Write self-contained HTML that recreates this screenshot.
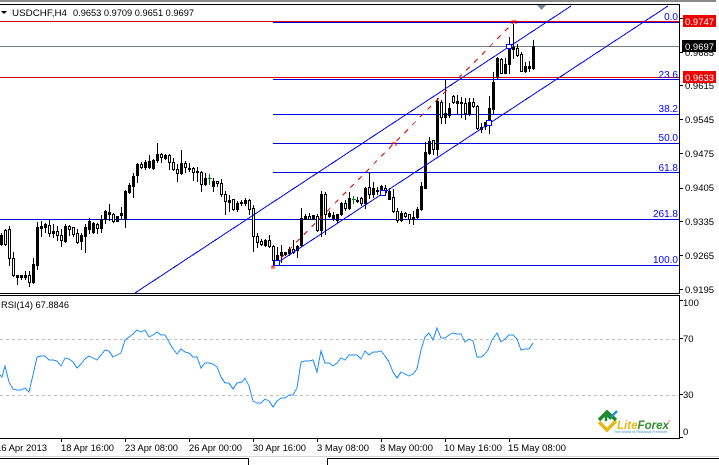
<!DOCTYPE html>
<html><head><meta charset="utf-8"><title>USDCHF,H4</title>
<style>
html,body{margin:0;padding:0;background:#fff;width:719px;height:465px;overflow:hidden}
svg{display:block}
text{font-family:"Liberation Sans",sans-serif;font-size:9.5px;fill:#000}
.f{fill:#0000ff;text-anchor:end;font-size:10px}
</style></head><body>
<svg width="719" height="465" viewBox="0 0 719 465" xmlns="http://www.w3.org/2000/svg">
<rect width="719" height="465" fill="#fff"/>
<rect x="0" y="0" width="716" height="2" fill="#8a8a8a"/>
<g shape-rendering="crispEdges" fill="none">
<path d="M0 21.5H679" stroke="#e00000"/>
<path d="M0 46.5H679" stroke="#708090"/>
<path d="M0 77.5H679" stroke="#e00000"/>
<path d="M0 219.5H679" stroke="#0000dd"/>
<path d="M273 22.5H679M273 79.5H679M273 114.5H679M273 143.5H679M273 172.5H679M273 265.5H679" stroke="#0000dd"/>
</g>
<!-- candles -->
<g shape-rendering="crispEdges" fill="none" stroke="#000">
<path d="M1.5 233V246M5.5 229V246M9.5 226V266M13.5 252V277M17.5 275V285M21.5 275V280M25.5 271V280M29.5 271V287M33.5 258V284M37.5 222V270M41.5 221V237M45.5 223V233M49.5 220V237M53.5 224V238M57.5 226V241M61.5 229V247M65.5 224V243M69.5 225V236M73.5 227V237M77.5 229V244M81.5 233V250M85.5 224V253M89.5 218V234M93.5 222V234M97.5 223V234M101.5 215V233M105.5 210V224M109.5 204V221M113.5 213V223M117.5 216V222M121.5 207V219M125.5 190V228M129.5 183V194M133.5 173V198M137.5 163V183M141.5 162V169M145.5 160V170M149.5 155V169M153.5 159V170M157.5 143V163M161.5 153V163M165.5 154V160M169.5 154V170M173.5 158V171M177.5 164V182M181.5 150V175M185.5 161V173M189.5 163V172M193.5 167V181M197.5 167V182M201.5 171V192M205.5 173V186M213.5 178V192M217.5 181V187M221.5 179V197M225.5 191V215M229.5 195V212M233.5 199V211M237.5 201V212M241.5 200V206M245.5 198V206M249.5 199V215M253.5 205V252M257.5 233V248M261.5 239V246M265.5 239V247M269.5 235V248M273.5 245V266M277.5 247V266M281.5 245V263M285.5 252V256M289.5 247V256M293.5 240V254M297.5 245V258M301.5 208V247M305.5 214V220M309.5 213V220M313.5 215V220M317.5 214V232M321.5 191V237M325.5 192V235M329.5 211V218M333.5 212V221M337.5 214V223M341.5 202V216M345.5 200V211M349.5 192V210M357.5 197V203M361.5 197V206M365.5 187V209M369.5 172V199M373.5 182V198M377.5 187V195M381.5 185V192M385.5 185V194M389.5 188V200M393.5 189V213M397.5 208V223M401.5 211V222M405.5 212V218M409.5 214V224M413.5 211V225M417.5 207V220M421.5 182V211M425.5 142V189M429.5 137V155M433.5 140V155M437.5 98V156M441.5 100V124M445.5 79V124M449.5 103V118M453.5 95V104M457.5 95V114M461.5 97V118M465.5 98V120M469.5 98V116M473.5 98V108M477.5 105V130M481.5 123V133M485.5 122V130M489.5 96V134M493.5 72V114M497.5 57V79M501.5 58V74M505.5 58V74M509.5 37V74M513.5 24V59M517.5 44V57M521.5 52V72M525.5 62V73M529.5 61V72M533.5 40V70"/>
<path stroke-width="3" d="M1.5 235V245M17.5 275V278M21.5 275V278M25.5 275V278M33.5 264V283M37.5 227V266M41.5 226V229M45.5 224V228M53.5 231V234M65.5 226V242M81.5 235V242M85.5 227V237M89.5 221V230M93.5 223V233M101.5 219V229M105.5 211V220M109.5 212V215M117.5 216V222M121.5 213V216M125.5 191V220M129.5 185V193M133.5 176V187M137.5 164V176M145.5 162V168M149.5 161V168M153.5 160V169M157.5 154V161M165.5 155V159M181.5 163V174M189.5 168V170M197.5 171V173M205.5 178V185M213.5 181V187M229.5 200V203M237.5 203V210M241.5 202V204M245.5 200V204M265.5 240V246M277.5 255V261M281.5 252V256M285.5 252V255M289.5 249V254M297.5 246V251M301.5 218V246M305.5 216V220M313.5 215V219M321.5 194V231M329.5 213V217M333.5 215V219M337.5 214V221M341.5 203V215M349.5 198V209M357.5 200V202M365.5 188V204M373.5 188V195M377.5 190V192M381.5 186V191M389.5 191V200M401.5 213V221M413.5 217V220M417.5 209V218M421.5 186V210M425.5 152V189M429.5 141V154M437.5 101V150M445.5 113V118M449.5 108V116M457.5 101V104M461.5 102V104M469.5 102V115M481.5 127V130M485.5 122V127M489.5 108V123M493.5 82V110M497.5 58V78M505.5 64V74M509.5 48V65M513.5 47V50M525.5 66V72M529.5 66V69M533.5 46V69"/>
<path fill="#fff" d="M4.5 230.5h2V244.5h-2zM8.5 229.5h2V258.5h-2zM12.5 258.5h2V275.5h-2zM28.5 275.5h2V282.5h-2zM48.5 225.5h2V233.5h-2zM56.5 231.5h2V235.5h-2zM60.5 235.5h2V240.5h-2zM68.5 226.5h2V229.5h-2zM72.5 227.5h2V234.5h-2zM76.5 233.5h2V242.5h-2zM96.5 224.5h2V228.5h-2zM112.5 214.5h2V221.5h-2zM140.5 164.5h2V167.5h-2zM160.5 154.5h2V157.5h-2zM168.5 155.5h2V162.5h-2zM172.5 162.5h2V169.5h-2zM176.5 169.5h2V173.5h-2zM184.5 163.5h2V167.5h-2zM192.5 168.5h2V172.5h-2zM200.5 172.5h2V184.5h-2zM216.5 181.5h2V183.5h-2zM220.5 183.5h2V194.5h-2zM224.5 194.5h2V201.5h-2zM232.5 199.5h2V209.5h-2zM248.5 200.5h2V209.5h-2zM252.5 208.5h2V236.5h-2zM256.5 236.5h2V242.5h-2zM260.5 241.5h2V244.5h-2zM268.5 240.5h2V246.5h-2zM272.5 246.5h2V260.5h-2zM292.5 249.5h2V252.5h-2zM308.5 216.5h2V219.5h-2zM316.5 216.5h2V230.5h-2zM324.5 194.5h2V214.5h-2zM344.5 203.5h2V208.5h-2zM360.5 198.5h2V203.5h-2zM368.5 187.5h2V194.5h-2zM384.5 188.5h2V192.5h-2zM392.5 197.5h2V211.5h-2zM396.5 211.5h2V220.5h-2zM404.5 213.5h2V216.5h-2zM408.5 214.5h2V219.5h-2zM432.5 140.5h2V149.5h-2zM440.5 102.5h2V117.5h-2zM452.5 96.5h2V102.5h-2zM464.5 103.5h2V113.5h-2zM472.5 102.5h2V106.5h-2zM476.5 106.5h2V128.5h-2zM500.5 59.5h2V73.5h-2zM516.5 48.5h2V55.5h-2zM520.5 54.5h2V71.5h-2z"/>
<path stroke="#008000" d="M209.5 174V185M208 178.5H212M353.5 196V204M352 199.5H356"/>
</g>
<!-- objects -->
<g fill="none">
<path d="M273 266L514 22" stroke="#e00000" stroke-dasharray="5 6" shape-rendering="crispEdges"/>
<path d="M272 269V266H274V269M392 146V143H396V146M512 24V21H516V24" stroke="#e00000" shape-rendering="crispEdges"/>
<path d="M135 293L571 6" stroke="#0000ff" shape-rendering="crispEdges"/>
<path d="M277 263L668 6" stroke="#0000ff" shape-rendering="crispEdges"/>
<g stroke="#0000ff" fill="#fff" shape-rendering="crispEdges">
<rect x="274.5" y="260.5" width="5" height="5"/>
<rect x="380.5" y="190.5" width="5" height="5"/>
<rect x="486.5" y="120.5" width="5" height="5"/>
<rect x="506.5" y="44.5" width="5" height="4"/>
</g>
</g>
<polygon points="537,5 546,5 541.5,10" fill="#778899"/>
<!-- frames -->
<g shape-rendering="crispEdges" fill="none" stroke="#000">
<path d="M0 4.5H679.5V293.5H0M0 295.5H679.5V438.5H0"/>
<path d="M680 18.5h3M680 52.5h3M680 85.5h3M680 119.5h3M680 153.5h3M680 188.5h3M680 221.5h3M680 255.5h3M680 289.5h3M680 300.5h3M680 338.5h3M680 394.5h3M680 437.5h3"/>
<path d="M61.5 439v3M125.5 439v3M189.5 439v3M253.5 439v3M317.5 439v3M381.5 439v3M445.5 439v3M509.5 439v3"/>
<path d="M0 458.5H248.5V465M327.5 465V458.5H719"/>
</g>
<path d="M0 456.5H719" stroke="#d8d8d8" shape-rendering="crispEdges"/>
<polygon points="1,11 7,11 4,14" fill="#000"/>
<!-- header -->
<text x="12" y="16" textLength="55" lengthAdjust="spacingAndGlyphs">USDCHF,H4</text>
<text x="73" y="16" textLength="121" lengthAdjust="spacingAndGlyphs">0.9653 0.9709 0.9651 0.9697</text>
<!-- fib labels -->
<text class="f" x="678" y="20">0.0</text>
<text class="f" x="678" y="78">23.6</text>
<text class="f" x="678" y="112">38.2</text>
<text class="f" x="678" y="141">50.0</text>
<text class="f" x="678" y="171">61.8</text>
<text class="f" x="678" y="217">261.8</text>
<text class="f" x="678" y="263">100.0</text>
<!-- price axis -->
<text x="685" y="22">0.9755</text>
<text x="685" y="56">0.9685</text>
<text x="685" y="89">0.9615</text>
<text x="685" y="123">0.9545</text>
<text x="685" y="157">0.9475</text>
<text x="685" y="191">0.9405</text>
<text x="685" y="225">0.9335</text>
<text x="685" y="259">0.9265</text>
<text x="685" y="293">0.9195</text>
<rect x="683" y="15" width="33" height="12" fill="#f00000"/>
<text x="685" y="25" style="fill:#fff">0.9747</text>
<rect x="682" y="40" width="34" height="12" fill="#000"/>
<text x="685" y="50" style="fill:#fff">0.9697</text>
<rect x="683" y="71" width="33" height="12" fill="#f00000"/>
<text x="685" y="81" style="fill:#fff">0.9633</text>
<!-- RSI -->
<path d="M0 339.5H679M0 395.5H679" stroke="#c0c0c0" stroke-dasharray="3 3" shape-rendering="crispEdges"/>
<polyline fill="none" stroke="#1e90ff" shape-rendering="crispEdges" points="0,375 2,377 5,366 9,382 13,389 17,390 21,390 25,388 29,392 33,375 37,357 41,356 45,356 49,360 53,360 57,361 61,366 65,358 69,359 73,362 77,368 81,364 85,359 89,356 93,358 97,360 101,355 105,350 109,351 113,357 117,355 121,353 125,340 129,337 133,334 137,330 141,332 145,330 149,337 153,335 157,332 161,335 165,335 169,342 173,349 177,354 181,349 185,352 189,353 193,357 197,357 201,368 205,363 209,363 213,364 217,367 221,377 225,383 229,383 233,389 237,383 242,382 245,378 249,386 253,401 257,403 261,403 265,399 269,401 273,407 277,401 281,398 285,398 289,395 293,395 297,388 301,362 305,361 309,361 313,360 317,372 321,351 325,363 329,363 333,366 337,363 341,358 345,360 349,355 353,355 357,355 361,359 365,351 369,355 373,352 377,352 381,351 385,356 389,362 393,372 397,378 401,372 405,374 409,376 413,374 417,369 421,350 425,337 429,333 433,340 437,328 441,338 445,338 449,335 453,333 457,334 461,334 465,342 469,339 473,341 477,357 481,357 484,355 488,350 492,340 497,333 501,342 505,339 509,335 513,335 517,339 521,350 525,349 529,349 533,343"/>
<text x="1" y="308" textLength="68" lengthAdjust="spacingAndGlyphs">RSI(14) 67.8846</text>
<text x="683" y="306">100</text>
<text x="683" y="342">70</text>
<text x="683" y="398">30</text>
<text x="683" y="435">0</text>
<!-- time axis -->
<text x="-4" y="451" textLength="51" lengthAdjust="spacingAndGlyphs">16 Apr 2013</text>
<text x="61" y="451" textLength="53" lengthAdjust="spacingAndGlyphs">18 Apr 16:00</text>
<text x="125" y="451" textLength="53" lengthAdjust="spacingAndGlyphs">23 Apr 08:00</text>
<text x="189" y="451" textLength="53" lengthAdjust="spacingAndGlyphs">26 Apr 00:00</text>
<text x="253" y="451" textLength="53" lengthAdjust="spacingAndGlyphs">30 Apr 16:00</text>
<text x="317" y="451" textLength="52" lengthAdjust="spacingAndGlyphs">3 May 08:00</text>
<text x="380" y="451" textLength="53" lengthAdjust="spacingAndGlyphs">8 May 00:00</text>
<text x="444" y="451" textLength="58" lengthAdjust="spacingAndGlyphs">10 May 16:00</text>
<text x="508" y="451" textLength="58" lengthAdjust="spacingAndGlyphs">15 May 08:00</text>
<!-- logo -->
<g fill="none">
<path d="M599 422L607 430L616 421" stroke="#e8b81a" stroke-width="3.5"/>
<path d="M599 420L607 412L616 420" stroke="#1e8a2e" stroke-width="3.5"/>
<path d="M606 421V414M606 414L611 419" stroke="#1e8a2e" stroke-width="2.5"/>
<path d="M611 417L617 411" stroke="#1e8fd8" stroke-width="2.5"/>
</g>
<text x="617" y="429" textLength="52" lengthAdjust="spacingAndGlyphs" style="font-size:12px;font-style:italic;font-weight:bold;fill:#e8b81a">Lite<tspan style="fill:#2f8f2f;font-size:12px">Forex</tspan></text>
<text x="614" y="433" textLength="53" lengthAdjust="spacingAndGlyphs" style="font-size:4px;fill:#3090d8">The World of Financial Freedom</text>
<circle cx="669.5" cy="421" r="1.2" fill="#f0b0b0"/>
</svg>
</body></html>
